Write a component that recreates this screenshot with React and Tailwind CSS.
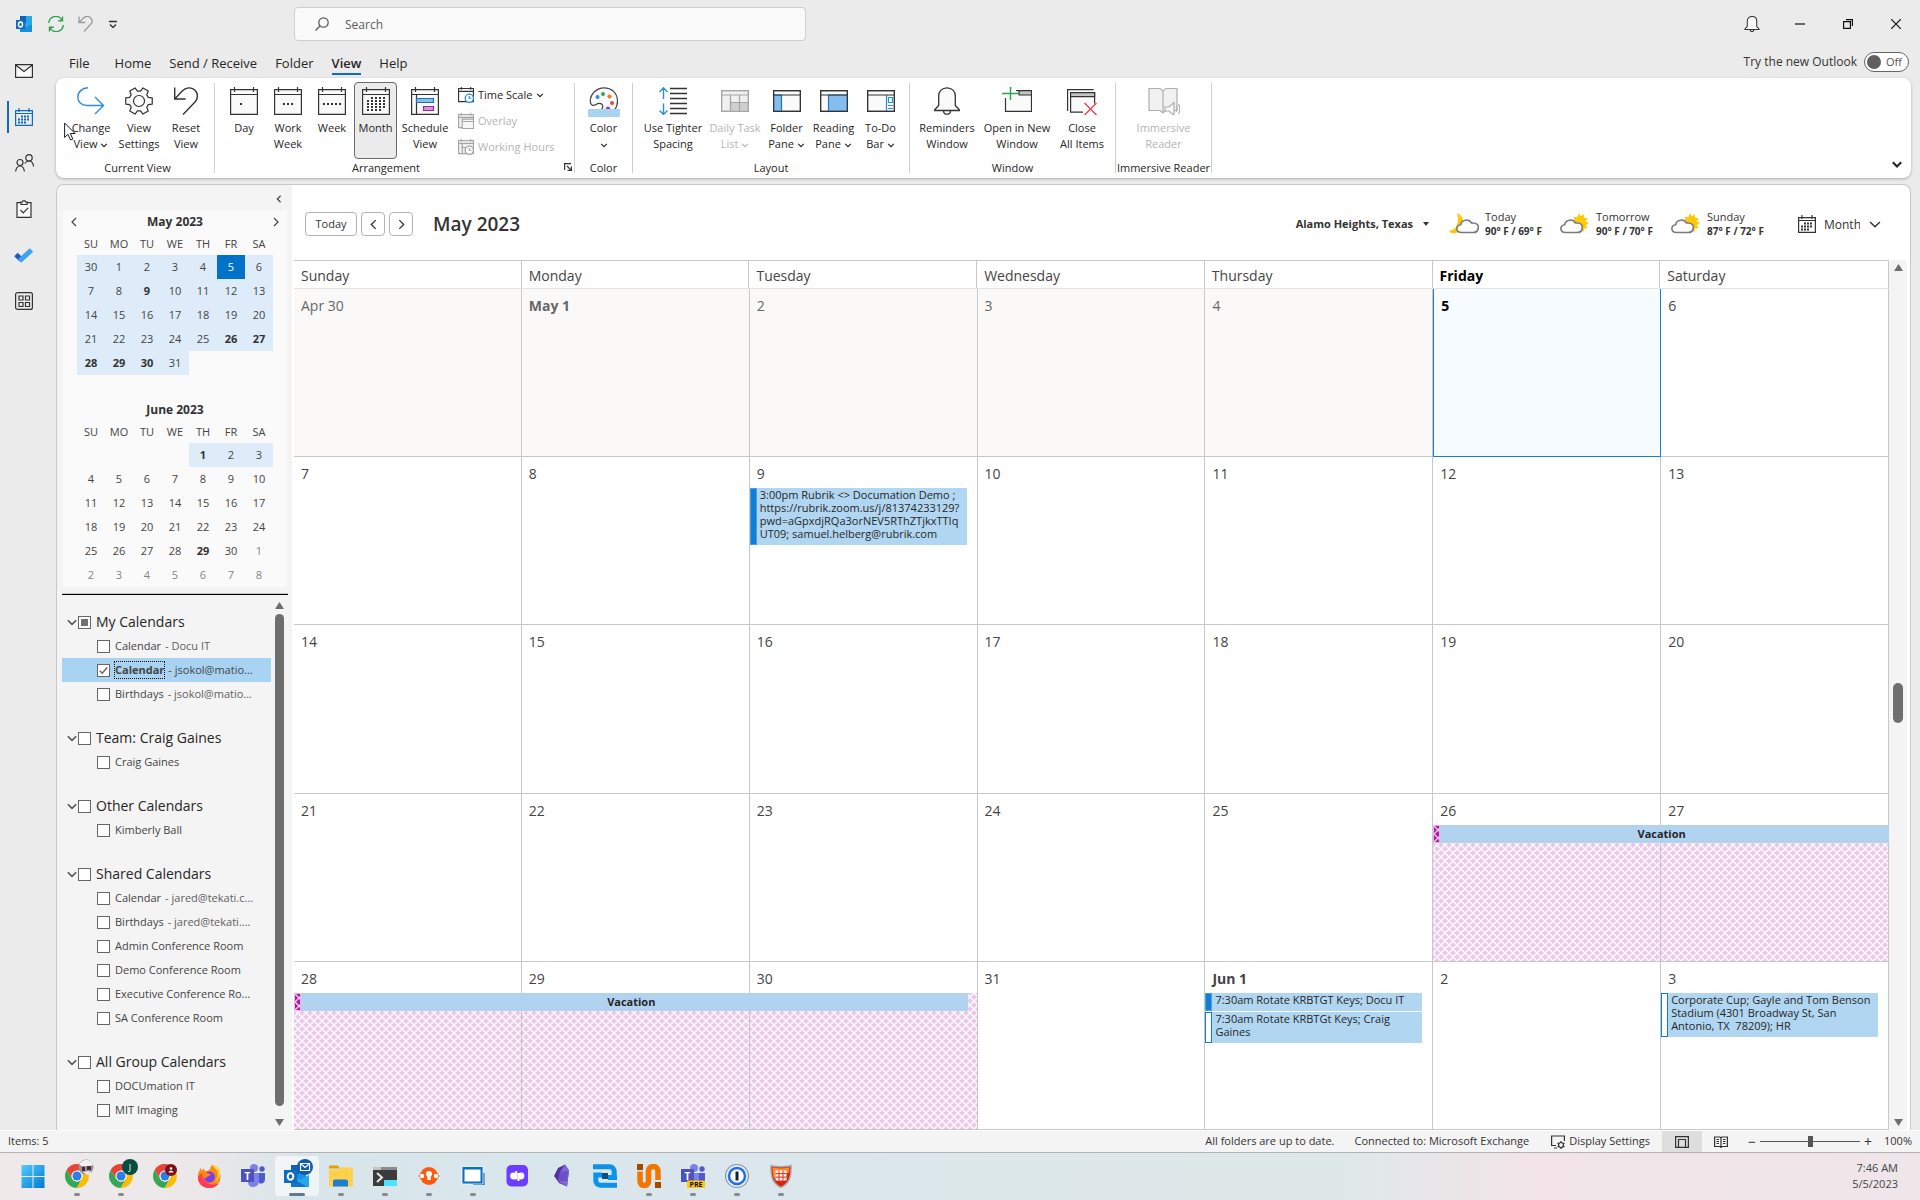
import { useState } from "react";
import clsx from "clsx";

const tabs = ["File", "Home", "Send / Receive", "Folder", "View", "Help"];

const miniMonths = [
  {
    title: "May 2023",
    nav: true,
    weeks: [
      [30, 1, 2, 3, 4, 5, 6],
      [7, 8, 9, 10, 11, 12, 13],
      [14, 15, 16, 17, 18, 19, 20],
      [21, 22, 23, 24, 25, 26, 27],
      [28, 29, 30, 31, null, null, null],
      [null, null, null, null, null, null, null],
    ],
    shaded: (w, d) => d !== null,
    bold: (w, d) => (w === 1 && d === 9) || (w >= 3 && [26, 27, 28, 29, 30].includes(d)),
    today: (w, d) => d === 5,
    muted: () => false,
  },
  {
    title: "June 2023",
    nav: false,
    weeks: [
      [null, null, null, null, 1, 2, 3],
      [4, 5, 6, 7, 8, 9, 10],
      [11, 12, 13, 14, 15, 16, 17],
      [18, 19, 20, 21, 22, 23, 24],
      [25, 26, 27, 28, 29, 30, 1],
      [2, 3, 4, 5, 6, 7, 8],
    ],
    shaded: (w, d) => w === 0 && d !== null,
    bold: (w, d) => (w === 0 && d === 1) || d === 29,
    today: () => false,
    muted: (w, d) => w === 5 || (w === 4 && d === 1),
  },
];

const calendarGroups = [
  {
    name: "My Calendars",
    partial: true,
    items: [
      { name: "Calendar", owner: "Docu IT" },
      { name: "Calendar", owner: "jsokol@matio...", selected: true },
      { name: "Birthdays", owner: "jsokol@matio..." },
    ],
  },
  { name: "Team: Craig Gaines", items: [{ name: "Craig Gaines" }] },
  { name: "Other Calendars", items: [{ name: "Kimberly Ball" }] },
  {
    name: "Shared Calendars",
    items: [
      { name: "Calendar", owner: "jared@tekati.c..." },
      { name: "Birthdays", owner: "jared@tekati...." },
      { name: "Admin Conference Room" },
      { name: "Demo Conference Room" },
      { name: "Executive Conference Ro..." },
      { name: "SA Conference Room" },
    ],
  },
  { name: "All Group Calendars", items: [{ name: "DOCUmation IT" }, { name: "MIT Imaging" }] },
];

const days = ["Sunday", "Monday", "Tuesday", "Wednesday", "Thursday", "Friday", "Saturday"];

const weeks = [
  ["Apr 30", "May 1", "2", "3", "4", "5", "6"],
  ["7", "8", "9", "10", "11", "12", "13"],
  ["14", "15", "16", "17", "18", "19", "20"],
  ["21", "22", "23", "24", "25", "26", "27"],
  ["28", "29", "30", "31", "Jun 1", "2", "3"],
];

// keyed by week index and weekday index
const events = {
  "1-2": [
    {
      solid: true,
      lines: [
        "3:00pm Rubrik <> Documation Demo ;",
        "https://rubrik.zoom.us/j/81374233129?",
        "pwd=aGpxdjRQa3orNEV5RThZTjkxTTIq",
        "UT09; samuel.helberg@rubrik.com",
      ],
    },
  ],
  "4-4": [
    { solid: true, lines: ["7:30am Rotate KRBTGT Keys; Docu IT"] },
    { solid: false, lines: ["7:30am Rotate KRBTGt Keys; Craig", "Gaines"] },
  ],
  "4-6": [
    { solid: false, lines: ["Corporate Cup; Gayle and Tom Benson", "Stadium (4301 Broadway St, San", "Antonio, TX  78209); HR"] },
  ],
};

function Chevron({ dir = "down", size = 10, width = 1.5 }) {
  const d = {
    down: "M1.5 3.5 5 7l3.5-3.5",
    left: "M7 1 3 5l4 4",
    right: "M3 1l4 4-4 4",
  }[dir];
  return (
    <svg width={size} height={size} viewBox="0 0 10 10" fill="none" stroke="currentColor" strokeWidth={width} className="inline-block shrink-0">
      <path d={d} />
    </svg>
  );
}

function Triangle({ up }) {
  return (
    <svg width="9" height="8" viewBox="0 0 9 8" className="shrink-0" fill="#6e6e6e">
      <path d={up ? "M4.5 0 9 7H0z" : "M4.5 8 0 1h9z"} />
    </svg>
  );
}

function Svg({ w = 28, h = w, box, children, className }) {
  return (
    <svg width={w} height={h} viewBox={box || `0 0 ${w} ${h}`} fill="none" stroke="#333" strokeWidth="1.2" className={clsx("shrink-0", className)}>
      {children}
    </svg>
  );
}

/* ---------- ribbon icons ---------- */

function CalFrame({ children }) {
  return (
    <Svg>
      <path d="M.6 2.6h26.8v24.8H.6z" fill="#fafafa" />
      <path d="M.6 7.5h26.8M4.5 0v5M23.5 0v5" />
      <g fill="#333" stroke="none">{children}</g>
    </Svg>
  );
}

const dot = (x, y) => <rect key={`${x}-${y}`} x={x} y={y} width="2" height="2" />;

const DayIcon = () => <CalFrame>{dot(10, 16)}</CalFrame>;
const WorkWeekIcon = () => <CalFrame>{[9, 13, 17].map((x) => dot(x, 16))}</CalFrame>;
const WeekIcon = () => <CalFrame>{[5, 9, 13, 17, 21].map((x) => dot(x, 16))}</CalFrame>;
const MonthIcon = () => (
  <CalFrame>
    {[9, 13, 17, 21].map((x) => dot(x, 10))}
    {[13, 16, 19].map((y) => [5, 9, 13, 17, 21].map((x) => dot(x, y)))}
    {[5, 9, 13, 17].map((x) => dot(x, 22))}
  </CalFrame>
);
const ScheduleIcon = () => (
  <CalFrame>
    <path d="M5.5 7.5v20" stroke="#333" />
    <path d="M5.5 11.5h17v4h-17z" fill="#83beec" stroke="#1f73b7" />
    <path d="M12.5 19.5h10v4h-10z" fill="#d993df" stroke="#8f2fa3" />
  </CalFrame>
);

const ChangeViewIcon = () => (
  <Svg>
    <path stroke="#2b8fd6" strokeWidth="1.4" d="M11 .8C5 1 .8 5 .8 10.2c0 5 4 8.3 9.2 8.3h16.5M18 10l8.5 8.5L18 27" />
  </Svg>
);

function GearIcon() {
  const points = [];
  for (let i = 0; i < 6; i++) {
    [[-21, 10], [-13, 13.6], [13, 13.6], [21, 10]].forEach(([off, r]) => {
      const a = ((i * 60 + off) * Math.PI) / 180;
      points.push(`${(14 + r * Math.cos(a)).toFixed(2)},${(14 + r * Math.sin(a)).toFixed(2)}`);
    });
  }
  return (
    <Svg>
      <polygon points={points.join(" ")} fill="#fafafa" strokeLinejoin="round" />
      <circle cx="14" cy="14" r="5.5" fill="#fff" />
    </Svg>
  );
}

const ResetIcon = () => (
  <Svg>
    <path strokeWidth="1.4" d="M2.7.5V12h11M3 11.7l7-7.5C14 0 19 0 22.5 2.8c4 3.5 3.6 9.2.3 12.5L11 27.5" />
  </Svg>
);

function SmallCal({ kind }) {
  const gray = kind !== "time";
  const c = gray ? "#a6a6a6" : "#333";
  return (
    <Svg w={16} box="0 0 17 17">
      <g stroke={c}>
        <path d="M.6 1.6h15.8v14H.6z" fill={gray ? "#f0f0f0" : "#fff"} />
        <path d="M.6 4.6h15.8M3.5 0v3M13.5 0v3" />
        {kind === "overlay" && <path d="M4.5 6.5h12v10h-12zM4.5 9h12" fill="#f6f6f6" />}
        {kind === "hours" && <path d="M4.5 5v11M4.5 9h8" />}
      </g>
      {kind !== "overlay" && (
        <g stroke={gray ? "#a6a6a6" : "#2b8fd6"} fill="#fff">
          <circle cx="12" cy="12" r="4.4" strokeWidth="1.4" />
          <path d="M12 9.5V12h2.2" />
        </g>
      )}
    </Svg>
  );
}

const PaletteIcon = () => (
  <Svg w={32} h={30}>
    <path d="M16 .8C8.5.8 2.5 7 2.2 14c-.1 4 3 5.5 5.8 3.5 2.5-1.8 5.5-1.5 6.5.5 1 2.2-.5 3-1 5h13c2-2.5 3-6 3-9C29.5 6 23.5.8 16 .8z" fill="#fafafa" stroke="#444" />
    <g stroke="none">
      <circle cx="9.5" cy="10" r="2" fill="#2b8fd6" />
      <circle cx="15" cy="7" r="2" fill="#3ba452" />
      <circle cx="21.5" cy="9.5" r="2.1" fill="#ef7d1a" />
      <circle cx="24" cy="16" r="2.1" fill="#ea4a4a" />
      <circle cx="20" cy="21.5" r="2.1" fill="#9b3fae" />
      <path d="M0 22h32v8H0z" fill="#a9d3f3" />
    </g>
  </Svg>
);

const TighterIcon = () => (
  <Svg>
    <path d="M11 1.5h17M11 6.5h17M11 11.5h17M11 16.5h17M11 21.5h17M11 26.5h17" strokeWidth="1.3" />
    <path d="M4.5 1v11M.5 5l4-4.2 4 4.2M4.5 27.5v-11M.5 23.5l4 4 4-4" stroke="#2b8fd6" strokeWidth="1.4" />
  </Svg>
);

function PaneIcon({ kind }) {
  return (
    <Svg>
      <g stroke={kind === "task" ? "#a6a6a6" : "#333"}>
        <path d="M.6 3.6h26.8v20.8H.6z" fill={kind === "task" ? "#f0f0f0" : "#fafafa"} />
        {kind === "folder" && <path d="M.6 8h7.9v16.4H.6z" fill="#83beec" stroke="#1f73b7" />}
        {kind === "reading" && <path d="M8.5 8h18.9v16.4H8.5z" fill="#83beec" stroke="#1f73b7" />}
        {kind === "todo" && <path d="M19.5 8v16.4M21.5 10.5h4v5h-4zM21 18.5h5M21 21.5h5" stroke="#2b8fd6" />}
        {kind === "task" && <path d="M9.5 15.5h17.9v9H9.5z" fill="#cfcfcf" />}
        {kind === "task" && <path d="M9.5 8v16.4M18.5 8v16.4" />}
        <path d="M.6 3.6h26.8V8H.6zM.6 8v16.4h26.8V8" />
      </g>
    </Svg>
  );
}

function BellIcon({ w = 28 }) {
  return (
    <Svg w={w} box="0 0 28 28">
      <path strokeWidth={w > 24 ? 1.3 : 1.8} d="M14 .8c5 0 8.3 3.5 8.3 8.2v9.5l4 4.2v.8H1.7v-.8l4-4.2V9C5.7 4.3 9 .8 14 .8zM10.5 23.7c0 2.2 1.5 3.5 3.5 3.5s3.5-1.3 3.5-3.5" fill="#fafafa" />
    </Svg>
  );
}

const NewWindowIcon = () => (
  <Svg w={30} h={28}>
    <path d="M3.5 11v13.4h26V3.6H14" fill="#fafafa" />
    <path d="M17 3.6h12.5V8H17z" fill="#c4c4c4" />
    <path d="M8.5-1v14M0 6.5h16" stroke="#fff" strokeWidth="4" />
    <path d="M8.5-1v14M0 6.5h16" stroke="#2fa04c" strokeWidth="1.5" />
  </Svg>
);

const CloseAllIcon = () => (
  <Svg w={30} h={28}>
    <path d="M.6 24V2.6h26" />
    <path d="M3.6 5.6h24v19.5h-24z" fill="#fafafa" />
    <path d="M3.6 5.6h24v4h-24z" fill="#c4c4c4" />
    <path d="M16 16.5h14V28H16z" fill="#fff" stroke="none" />
    <path d="M17.5 16l12 12M29.5 16l-12 12" stroke="#e94b4b" strokeWidth="1.5" />
  </Svg>
);

const ReaderIcon = () => (
  <Svg w={32} h={28}>
    <g stroke="#b0b0b0" fill="#f1f1f1">
      <path d="M1 1.5h11l3 2.5 3-2.5h11v22H18L15 26l-3-2.5H1zM15 4v21" />
      <path d="M17 20h4l5-4.5v13L21 24h-4z" fill="#f8f8f8" />
      <path d="M28 19c1.2 1.5 1.2 4.5 0 6M30.3 17c2 2.5 2 7.5 0 10" fill="none" />
    </g>
  </Svg>
);

/* ---------- ribbon parts ---------- */

function RibbonButton({ icon, top, bottom, arrow, width, active, disabled }) {
  return (
    <button
      disabled={disabled}
      aria-pressed={active}
      className={clsx(
        "flex h-[77px] shrink-0 flex-col items-center rounded text-[11px] leading-4",
        width,
        active ? "border border-[#6b6b6b] bg-[#ebebeb] pt-1" : "pt-[5px]",
        disabled ? "text-[#b4b4b4]" : "text-[#262626]"
      )}
    >
      <span className="mb-1 flex h-[29px] justify-center">{icon}</span>
      <span className="whitespace-nowrap">{top}</span>
      <span className="whitespace-nowrap">
        {bottom} {arrow && <Chevron size={8} />}
      </span>
    </button>
  );
}

function RibbonGroup({ label, className, launcher, children }) {
  return (
    <section className="flex pt-[5px] pb-[3px]">
      <div className={clsx("flex flex-col justify-between", className)}>
        <div className="-mt-px flex">{children}</div>
        <div className={clsx("relative text-center text-[11px] leading-[14px] whitespace-nowrap text-[#262626]", launcher && "pr-6")}>
          {label}
          {launcher && (
            <button aria-label="Arrangement options" className="absolute top-0.5 right-0.5">
              <Svg w={8}>
                <path d="M.6 7V.6H7M3 3l4.4 4.4M7.4 3.5v3.9H3.5" />
              </Svg>
            </button>
          )}
        </div>
      </div>
      <div className="mb-0.5 w-px bg-[#cfcfcf]" />
    </section>
  );
}

function Ribbon() {
  return (
    <div className="flex h-[100px] items-stretch rounded-lg bg-white shadow-[0_1px_3px_rgba(0,0,0,0.28)]">
      <RibbonGroup label="Current View" className="w-[158px] pr-1.5 pl-[11px]">
        <div className="relative">
          <RibbonButton width="w-12" icon={<ChangeViewIcon />} top="Change" bottom="View" arrow />
          <svg className="pointer-events-none absolute top-10 -left-[3px]" width="12" height="19" viewBox="0 0 12 19" fill="#fff" stroke="#1a1a2a">
            <path d="M.6 1v14.5l3.3-3.2 2.6 5.7 2.3-1-2.5-5.5h4.8z" />
          </svg>
        </div>
        <RibbonButton width="w-12" icon={<GearIcon />} top="View" bottom="Settings" />
        <RibbonButton width="w-[46px]" icon={<ResetIcon />} top="Reset" bottom="View" />
      </RibbonGroup>
      <RibbonGroup label="Arrangement" className="w-[359px] pl-[7px]" launcher>
        <RibbonButton width="w-11" icon={<DayIcon />} top="Day" bottom="" />
        <RibbonButton width="w-11" icon={<WorkWeekIcon />} top="Work" bottom="Week" />
        <RibbonButton width="w-11" icon={<WeekIcon />} top="Week" bottom="" />
        <RibbonButton width="w-[43px]" icon={<MonthIcon />} top="Month" bottom="" active />
        <RibbonButton width="w-14" icon={<ScheduleIcon />} top="Schedule" bottom="View" />
        <div className="flex flex-col pl-[5px] text-[11px] whitespace-nowrap">
          <button className="flex h-[26px] items-center gap-1 text-[#262626]">
            <SmallCal kind="time" /> Time Scale <Chevron size={8} />
          </button>
          <button disabled className="flex h-[26px] items-center gap-1 text-[#b4b4b4]">
            <SmallCal kind="overlay" /> Overlay
          </button>
          <button disabled className="flex h-[26px] items-center gap-1 text-[#b4b4b4]">
            <SmallCal kind="hours" /> Working Hours
          </button>
        </div>
      </RibbonGroup>
      <RibbonGroup label="Color" className="w-[57px] items-center">
        <RibbonButton width="w-12" icon={<PaletteIcon />} top="Color" bottom="" arrow />
      </RibbonGroup>
      <RibbonGroup label="Layout" className="w-[276px] px-1.5">
        <RibbonButton width="w-[68px]" icon={<TighterIcon />} top="Use Tighter" bottom="Spacing" />
        <RibbonButton width="w-14" icon={<PaneIcon kind="task" />} top="Daily Task" bottom="List" arrow disabled />
        <RibbonButton width="w-[47px]" icon={<PaneIcon kind="folder" />} top="Folder" bottom="Pane" arrow />
        <RibbonButton width="w-[47px]" icon={<PaneIcon kind="reading" />} top="Reading" bottom="Pane" arrow />
        <RibbonButton width="w-[47px]" icon={<PaneIcon kind="todo" />} top="To-Do" bottom="Bar" arrow />
      </RibbonGroup>
      <RibbonGroup label="Window" className="w-[205px] px-1">
        <RibbonButton width="w-[66px]" icon={<BellIcon />} top="Reminders" bottom="Window" />
        <RibbonButton width="w-[74px]" icon={<NewWindowIcon />} top="Open in New" bottom="Window" />
        <RibbonButton width="w-14" icon={<CloseAllIcon />} top="Close" bottom="All Items" />
      </RibbonGroup>
      <RibbonGroup label="Immersive Reader" className="w-[95px] items-center">
        <RibbonButton width="w-16" icon={<ReaderIcon />} top="Immersive" bottom="Reader" disabled />
      </RibbonGroup>
      <button aria-label="Collapse ribbon" className="ml-auto self-end px-2 pb-1 text-[#262626]">
        <Chevron size={12} width={1.8} />
      </button>
    </div>
  );
}

/* ---------- title bar ---------- */

function TitleBar() {
  return (
    <header className="flex h-12 items-center pl-4">
      <Svg w={16}>
        <g stroke="none">
          <path d="M4 0h12v14H4z" fill="#28a8ea" />
          <path d="M4 0h6v7H4z" fill="#0f64b5" />
          <path d="M4 8l6 3.5L16 8v8H4z" fill="#1490df" />
          <path d="M0 4h9v9H0z" fill="#0f6cbd" />
          <ellipse cx="4.5" cy="8.5" rx="2" ry="2.4" fill="none" stroke="#fff" strokeWidth="1.5" />
        </g>
      </Svg>
      <button aria-label="Sync" className="ml-4">
        <Svg w={16}>
          <path stroke="#2fa04c" strokeWidth="1.4" d="M.8 7A7 7 0 0 1 14 4.2M14.5.5v4.3h-4.3M15.2 9A7 7 0 0 1 2 11.8M1.5 15.5v-4.3h4.3" />
        </Svg>
      </button>
      <button aria-label="Undo" className="ml-[14px]">
        <Svg w={15} h={16}>
          <path stroke="#9a9a9a" strokeWidth="1.3" d="M1 .5v6h6.2M1.2 6.2 5.5 2c2-2 5-2 7-.2 2 2 2 4.6.2 6.5L6 15.5" />
        </Svg>
      </button>
      <button aria-label="Customize quick access" className="ml-4">
        <Svg w={8}>
          <path d="M0 1.5h8M1 4.5l3 3 3-3" strokeWidth="1.4" />
        </Svg>
      </button>
      <label className="ml-[177px] flex h-[34px] w-[512px] items-center gap-4 rounded border border-[#cfcfcf] bg-[#fafafa] px-5">
        <Svg w={14}>
          <circle cx="8.5" cy="5.5" r="4.7" stroke="#555" />
          <path d="M5 9 .5 13.5" stroke="#555" />
        </Svg>
        <input type="text" placeholder="Search" aria-label="Search" className="w-full bg-transparent pt-0.5 text-[12px] placeholder:text-[#5c5c5c] focus:outline-none" />
      </label>
      <div className="ml-auto flex items-center">
        <button aria-label="Notifications" className="flex w-12 justify-center">
          <BellIcon w={16} />
        </button>
        <button aria-label="Minimize" className="flex w-12 justify-center">
          <Svg w={10}>
            <path d="M0 5h10" stroke="#111" />
          </Svg>
        </button>
        <button aria-label="Restore" className="flex w-12 justify-center">
          <Svg w={10}>
            <path d="M.6 2.6h6.8v6.8H.6zM3 .6h6.4V7" stroke="#111" />
          </Svg>
        </button>
        <button aria-label="Close" className="flex w-12 justify-center">
          <Svg w={10}>
            <path d="m0 0 10 10M10 0 0 10" stroke="#111" />
          </Svg>
        </button>
      </div>
    </header>
  );
}

/* ---------- left rail ---------- */

function Rail() {
  const items = [
    ["Mail", <Svg w={18} h={14}><path d="M.6.6h16.8v12.8H.6zM.6 1 9 7.5 17.4 1" fill="#fafafa" /></Svg>],
    [
      "Calendar",
      <Svg w={18}>
        <path d="M.6 2.6h16.8v14.8H.6zM.6 5.5h16.8M4 0v4M14 0v4" stroke="#0f6cbd" />
        <path d="M6 8.5h9M3 11.5h12M3 14.5h8" stroke="#0f6cbd" strokeWidth="2" strokeDasharray="2 1" />
      </Svg>,
    ],
    ["People", <Svg w={19}><circle cx="5" cy="8.5" r="3" /><circle cx="14" cy="3.8" r="3.2" /><path d="M.6 17.5c.5-3.5 2-5.5 4.4-5.5s4 2 4.4 5.5M9.8 9.5C10.700 8 12.100 7 14 7c2.600 0 4.200 2 4.600 5.500" /></Svg>],
    ["Tasks", <Svg w={16} h={18}><path d="M1 2.6h14v14.8H1z" fill="#fafafa" /><path d="M5 4.5V2h1.5C6.5.8 7 .6 8 .6s1.500.2 1.500 1.400H11v2.500zM4.500 10l2.700 2.800 5-5" fill="#fafafa" /></Svg>],
    ["To Do", <Svg w={20} h={16}><path d="m2 7.5 5 5" stroke="#185abd" strokeWidth="5" /><path d="m5.5 14 12-11" stroke="#3fa2ee" strokeWidth="5" /></Svg>],
    ["More apps", <Svg w={18}><rect x=".6" y=".6" width="16.8" height="16.8" rx="2" /><path d="M4 4h4v4H4zM10.5 4h4v4h-4zM4 10.5h4v4H4zM10.5 10.5h4v4h-4z" /></Svg>],
  ];
  return (
    <nav className="flex w-14 shrink-0 flex-col">
      {items.map(([name, icon]) => (
        <button key={name} aria-label={name} className="flex h-[46px] items-center pl-[7px]">
          <span className={clsx("h-8 w-0.5", name === "Calendar" && "bg-[#0f6cbd]")} />
          <span className="ml-[5px] flex w-5 justify-center">{icon}</span>
        </button>
      ))}
    </nav>
  );
}

/* ---------- sidebar ---------- */

function MiniMonth({ month }) {
  return (
    <div className="px-1.5">
      <div className="flex h-[22px] items-center justify-between text-[#444]">
        <button aria-label="Previous month" className={clsx("flex", !month.nav && "invisible")}>
          <Chevron dir="left" width={1.2} />
        </button>
        <h3 className="text-[12px] font-bold text-[#333]">{month.title}</h3>
        <button aria-label="Next month" className={clsx("flex", !month.nav && "invisible")}>
          <Chevron dir="right" width={1.2} />
        </button>
      </div>
      <table className="mx-auto table-fixed text-center text-[11px] text-[#444]">
        <thead>
          <tr className="h-[22px]">
            {["SU", "MO", "TU", "WE", "TH", "FR", "SA"].map((d) => (
              <th key={d} className="w-7 p-0 font-normal">{d}</th>
            ))}
          </tr>
        </thead>
        <tbody>
          {month.weeks.map((week, w) => (
            <tr key={w} className="h-6">
              {week.map((d, i) => (
                <td
                  key={i}
                  className={clsx(
                    "w-7 p-0 pt-px",
                    month.today(w, d) ? "bg-[#0072c9] text-white" : month.shaded(w, d) && "bg-[#deebf9]",
                    month.bold(w, d) && "font-bold text-[#333]",
                    month.muted(w, d) && "text-[#858585]"
                  )}
                >
                  {d}
                </td>
              ))}
            </tr>
          ))}
        </tbody>
      </table>
    </div>
  );
}

function Check({ id, checked, onChange, partial }) {
  return (
    <span className="grid size-[13px] shrink-0 place-items-center">
      <input id={id} type="checkbox" checked={checked} onChange={onChange} className="col-start-1 row-start-1 size-[13px] appearance-none border border-[#666] bg-white" />
      {partial && <span className="pointer-events-none col-start-1 row-start-1 size-[7px] bg-[#707070]" />}
      {checked && (
        <svg width="9" height="9" viewBox="0 0 9 9" fill="none" stroke="#666" strokeWidth="1.5" className="pointer-events-none col-start-1 row-start-1">
          <path d="M.8 4.8 3.2 7.2l5-5.7" />
        </svg>
      )}
    </span>
  );
}

function Sidebar() {
  const [checked, setChecked] = useState({ "0-1": true });
  const toggle = (id) => setChecked((c) => ({ ...c, [id]: !c[id] }));

  return (
    <aside className="flex w-[235px] shrink-0 flex-col bg-[#f4f4f4] pl-[5px]">
      <div className="flex h-[26px] items-center justify-end pt-0.5 pr-[9px]">
        <button aria-label="Minimize folder pane" className="flex text-[#555]">
          <Chevron dir="left" size={8} width={1.8} />
        </button>
      </div>
      <div className="mr-[5px] ml-px bg-[#fafafa]">
        {miniMonths.map((m) => (
          <MiniMonth key={m.title} month={m} />
        ))}
      </div>
      <div className="mt-1.5 mr-1 mb-[3px] h-0.5 border-t border-b border-t-[#c8c8c8] border-b-[#000]" />
      <div className="flex flex-1 pr-2 pb-1">
        <div className="flex flex-1 flex-col gap-5 pt-3">
          {calendarGroups.map((g, gi) => (
            <section key={g.name}>
              <div className="flex h-6 items-center pl-1">
                <button aria-label={`Collapse ${g.name}`} className="flex text-[#555]">
                  <Chevron size={12} width={1.3} />
                </button>
                <Check id={`g${gi}`} partial={g.partial} checked={!!checked[`g${gi}`]} onChange={() => toggle(`g${gi}`)} />
                <label htmlFor={`g${gi}`} className="pl-[5px] text-[14px] leading-5 whitespace-nowrap text-[#262626]">{g.name}</label>
              </div>
              {g.items.map((c, i) => {
                const id = `${gi}-${i}`;
                return (
                  <div key={id} className={clsx("flex h-6 items-center pl-[35px]", c.selected && "bg-[#a9d3f3]")}>
                    <Check id={id} checked={!!checked[id]} onChange={() => toggle(id)} />
                    <label htmlFor={id} className="flex gap-[3px] pl-1 text-[11px] leading-4 whitespace-nowrap text-[#444]">
                      <span className={clsx("border border-dotted", c.selected ? "border-[#111] font-bold" : "border-transparent")}>{c.name}</span>
                      {c.owner && <span className={clsx("py-px", !c.selected && "text-[#5f5f5f]")}>- {c.owner}</span>}
                    </label>
                  </div>
                );
              })}
            </section>
          ))}
        </div>
        <div className="flex w-[13px] flex-col items-end gap-1 pt-1">
          <Triangle up />
          <div className="w-[9px] flex-1 rounded-full bg-[#6e6e6e]" />
          <span className="pt-2">
            <Triangle />
          </span>
        </div>
      </div>
    </aside>
  );
}

/* ---------- calendar toolbar ---------- */

function WeatherIcon({ night }) {
  return (
    <svg width="30" height="22" viewBox="0 0 30 22" fill="none" className="shrink-0">
      {night ? (
        <path d="M8 0c8 3 8 12 2 18-3 3-8 3-10 0 7-1 11-8 8-18z" fill="#ffc800" />
      ) : (
        <path d="M19 0l1.7 3.2 3.1-1.9L24 5l3.6.3-1.9 3.2L29 10.2 25.7 12l1.8 3.2-3.6.2-.3 3.6L18 16 13 8l1.5-.5-.6-3.5 3.5.2z" fill="#ffc800" />
      )}
      <path
        transform={night ? "translate(7 3)" : "translate(0 3)"}
        d="M5.5 16.5c-6 0-6-7.500-.8-7.700C5.300 4 12.500 2 15.500 7c6-.5 7.500 2.500 6.700 5.500-.5 3-2.700 4-5 4z"
        fill="#fff"
        stroke="#7a7a7a"
        strokeWidth="1.6"
      />
    </svg>
  );
}

function CalendarToolbar() {
  const weather = [
    { day: "Today", temp: "90° F / 69° F", night: true },
    { day: "Tomorrow", temp: "90° F / 70° F" },
    { day: "Sunday", temp: "87° F / 72° F" },
  ];
  return (
    <div className="flex h-[75px] items-center pt-[3px] pr-7 pl-[11px] text-[#333]">
      <div className="flex gap-1">
        <button className="h-6 w-[52px] rounded border border-[#b3b3b3] text-[11px]">Today</button>
        <button aria-label="Previous" className="flex size-6 items-center justify-center rounded border border-[#b3b3b3]">
          <Chevron dir="left" size={11} width={1.2} />
        </button>
        <button aria-label="Next" className="flex size-6 items-center justify-center rounded border border-[#b3b3b3]">
          <Chevron dir="right" size={11} width={1.2} />
        </button>
      </div>
      <h1 className="ml-5 text-[19px] leading-6 font-semibold">May 2023</h1>
      <button className="ml-auto flex items-center text-[11px] font-bold whitespace-nowrap">
        Alamo Heights, Texas
        <svg width="6" height="4" viewBox="0 0 6 4" className="ml-2.5" fill="#333">
          <path d="M0 0h6L3 4z" />
        </svg>
      </button>
      <div className="ml-5 flex">
        {weather.map((w) => (
          <div key={w.day} className="flex w-[111px] items-center gap-1.5 text-[11px] leading-[15px] whitespace-nowrap">
            <WeatherIcon night={w.night} />
            <div>
              <p>{w.day}</p>
              <p className="text-[10px] font-bold">{w.temp}</p>
            </div>
          </div>
        ))}
      </div>
      <label className="ml-4 flex items-center gap-2">
        <Svg w={18}>
          <path d="M.6 2.6h16.8v14.8H.6zM.6 5.5h16.8M4 0v4M14 0v4" />
          <path d="M6 8.5h9M3 11.5h12M3 14.5h8" strokeWidth="2" strokeDasharray="2 1" />
        </Svg>
        <select aria-label="Calendar view" className="w-9 appearance-none bg-transparent pt-px text-[12px]">
          <option>Month</option>
        </select>
        <Chevron size={14} width={1} />
      </label>
    </div>
  );
}

/* ---------- month grid ---------- */

function EventCard({ event }) {
  return (
    <div className="mr-2.5 flex bg-[#b1d6f1] text-[11px] leading-[13px] text-[#262626]">
      <span className={clsx("w-[7px] shrink-0 border", event.solid ? "border-[#4ca0e0] bg-[#0f7fd6]" : "border-[#0f7fd6] bg-white")} />
      <div className="pb-[5px] pl-[3px] whitespace-pre">
        {event.lines.map((l) => (
          <p key={l}>{l}</p>
        ))}
      </div>
    </div>
  );
}

const hatch =
  "bg-[#eec5eb] bg-[linear-gradient(45deg,transparent_38%,#fff_50%,transparent_62%),linear-gradient(-45deg,transparent_38%,#fff_50%,transparent_62%)] bg-[length:8px_8px]";

const hatchDark =
  "bg-[#b515ab] bg-[linear-gradient(45deg,transparent_38%,#f3d3f0_50%,transparent_62%),linear-gradient(-45deg,transparent_38%,#f3d3f0_50%,transparent_62%)] bg-[length:8px_8px]";

function Vacation({ span, open }) {
  return (
    <>
      <div className={clsx("row-start-1 mt-[31px]", span, hatch)} />
      <div className={clsx("z-10 row-start-1 mt-[31px] flex h-[18px]", span, !open && "mr-2.5")}>
        <span className={clsx("w-[7px] border border-[#e9b5e5]", hatchDark)} />
        <span className="flex-1 bg-[#b1d3f0] pr-1.5 text-center text-[11px] leading-[18px] font-bold text-[#262626]">Vacation</span>
      </div>
    </>
  );
}

const columns = ["col-start-1", "col-start-2", "col-start-3", "col-start-4", "col-start-5", "col-start-6", "col-start-7"];

function MonthGrid() {
  return (
    <div className="flex flex-1 flex-col border-t border-[#c8c8c8]">
      <div className="grid h-[27px] grid-cols-7 border-r border-[#c8c8c8]">
        {days.map((d, i) => (
          <div key={d} className={clsx("border-[#c8c8c8] pl-[7px] text-[14px] leading-[30px] text-[#444]", i < 6 && "border-r", d === "Friday" && "font-bold text-black")}>
            {d}
          </div>
        ))}
      </div>
      <div className="grid flex-1 grid-rows-5 border-t border-[#e3e3e3]">
        {weeks.map((week, w) => (
          <div key={w} className="grid min-h-28 grid-cols-7 grid-rows-1">
            {w === 3 && <Vacation span="col-start-6 col-span-2" open />}
            {w === 4 && <Vacation span="col-start-1 col-span-3" />}
            {week.map((label, i) => {
              const past = w === 0 && i < 5;
              const today = w === 0 && i === 5;
              const monthStart = label.endsWith(" 1");
              const cellEvents = events[`${w}-${i}`];
              return (
                <div
                  key={label}
                  className={clsx(
                    "row-start-1 min-w-0 border-r border-b",
                    columns[i],
                    past && "bg-[#faf9f8] text-[#666]",
                    !past && !today && "text-[#444]",
                    today ? "border-l border-[#1a7fd0] bg-[#f6fbff] font-bold text-black" : "border-[#c8c8c8]",
                    monthStart && "font-bold"
                  )}
                >
                  <p className="h-[31px] pt-1 pl-[7px] text-[14px] leading-[26px]">{label}</p>
                  {cellEvents && (
                    <div className="flex flex-col gap-px font-normal">
                      {cellEvents.map((e) => (
                        <EventCard key={e.lines[0]} event={e} />
                      ))}
                    </div>
                  )}
                </div>
              );
            })}
          </div>
        ))}
      </div>
    </div>
  );
}

/* ---------- status bar ---------- */

function StatusBar() {
  return (
    <footer className="flex h-[23px] items-center border-t border-b border-t-white border-b-[#b3b3b3] bg-[#f4f4f4] px-2 text-[11px] text-[#333]">
      <span>Items: 5</span>
      <span className="ml-auto">All folders are up to date.</span>
      <span className="ml-5">Connected to: Microsoft Exchange</span>
      <button className="ml-[22px] flex items-center gap-1">
        <Svg w={14}>
          <path d="M5 10.5H.6V1h12.8v5M3 13h3" />
          <circle cx="10" cy="10" r="2.5" />
          <path d="M10 6v2M10 12v2M6.5 8l1.7 1M11.8 11l1.7 1M6.5 12l1.7-1M11.8 9l1.7-1" />
        </Svg>
        Display Settings
      </button>
      <button aria-label="Normal view" className="ml-3 flex h-full w-10 items-center justify-center bg-[#dedede]">
        <Svg w={14} h={12}>
          <path d="M.6.6h12.8v10.8H.6zM3.5 11V3.5h7V11" />
        </Svg>
      </button>
      <button aria-label="Reading view" className="flex w-[38px] justify-center">
        <Svg w={14} h={12}>
          <path d="M.6 1H6l1 1 1-1h5.4v9.5H8l-1 1-1-1H.6zM7 2v9M2.5 3.5H5M2.5 5.5H5M2.5 7.5H5M9 3.5h2.5M9 5.5h2.5M9 7.5h2.5" />
        </Svg>
      </button>
      <button aria-label="Zoom out" className="ml-2 text-[14px] leading-5">−</button>
      <input
        type="range"
        aria-label="Zoom"
        defaultValue={50}
        className="mx-1 h-px w-[100px] appearance-none bg-[#555] [&::-webkit-slider-thumb]:h-[11px] [&::-webkit-slider-thumb]:w-[5px] [&::-webkit-slider-thumb]:appearance-none [&::-webkit-slider-thumb]:bg-[#555]"
      />
      <button aria-label="Zoom in" className="text-[14px] leading-5">+</button>
      <span className="ml-3">100%</span>
    </footer>
  );
}

/* ---------- taskbar ---------- */

function Chrome({ badge }) {
  return (
    <Svg w={32} box="-4 -4 32 32" className="overflow-visible">
      <g stroke="none">
        <path d="M12 6.5h10.6A12 12 0 0 0 1.6 6l5.6 8.8z" fill="#ea4335" />
        <path d="M22.6 6.5H12a5.5 5.5 0 0 1 4.8 8.2L11.5 24A12 12 0 0 0 22.6 6.5z" fill="#fbbc04" />
        <path d="M1.6 6l5.6 8.8a5.5 5.5 0 0 0 9.6-.1L11.5 24A12 12 0 0 1 1.6 6z" fill="#34a853" />
        <circle cx="12" cy="12" r="5.6" fill="#fff" />
        <circle cx="12" cy="12" r="4.5" fill="#2f7de9" />
        {badge === "photo" && (
          <>
            <circle cx="21" cy="3" r="7.5" fill="#9a9296" />
            <path d="M14.5 1c1-6 12-7 13.5 0l-3 1h-8z" fill="#f2f2f2" />
            <path d="M17 3h3v4h-3zM22 2h4v4h-4z" fill="#4a2a38" />
            <path d="M18 8l6-1 3 2-5 2z" fill="#efe4e4" />
          </>
        )}
        {badge === "J" && <circle cx="21" cy="3" r="8" fill="#064e40" />}
        {badge === "user" && (
          <>
            <circle cx="18" cy="6" r="6" fill="#7a1015" />
            <circle cx="18" cy="4.5" r="1.3" fill="#fff" />
            <path d="M15.5 8.5c0-2.5 5-2.5 5 0z" fill="#fff" />
          </>
        )}
      </g>
      {badge === "J" && (
        <text x="21" y="6.5" textAnchor="middle" fontSize="9" fill="#fff" stroke="none">J</text>
      )}
    </Svg>
  );
}

function Teams({ pre }) {
  return (
    <Svg w={24} className="overflow-visible">
      <g stroke="none">
        <circle cx="13" cy="4" r="4" fill="#7b83eb" />
        <circle cx="21" cy="5" r="2.7" fill="#5059c9" />
        <path d="M16 9h8v7a4 4 0 0 1-6 3z" fill="#5059c9" />
        <path d="M7 9h11v8c0 4-3 6-6 6s-5-2-5-5z" fill="#7b83eb" />
        <path d="M0 5h13v13H0z" fill="#4b53bc" />
      </g>
      <text x="6.5" y="15.5" textAnchor="middle" fontSize="10" fontWeight="700" fill="#fff" stroke="none">T</text>
      {pre && <rect x="6" y="16.5" width="18" height="7.5" rx="1" fill="#ffc800" stroke="none" />}
      {pre && (
        <text x="15" y="23" textAnchor="middle" fontSize="7" fontWeight="700" fill="#111" stroke="none">PRE</text>
      )}
    </Svg>
  );
}

const taskbarApps = [
  ["Start", false, <Svg w={24}><g fill="url(#win)" stroke="none"><defs><linearGradient id="win" x1="0" y1="0" x2="24" y2="24" gradientUnits="userSpaceOnUse"><stop stopColor="#55d0fb" /><stop offset="1" stopColor="#0078d4" /></linearGradient></defs><path d="M.5 1h11v11H.5zM12.5 1h11v11h-11zM.5 13h11v11H.5zM12.5 13h11v11h-11z" /></g></Svg>],
  ["Chrome, personal", true, <Chrome badge="photo" />],
  ["Chrome, work", true, <Chrome badge="J" />],
  ["Chrome, guest", false, <Chrome badge="user" />],
  ["Firefox", false, <Svg w={24}><g stroke="none"><path d="M12 24C5 24 .8 19 .8 13c0-4 1.2-6 3-9l.8 2.5L7 4.5l1 3 5-2c0-2 1.5-4.5 3-5 0 2 2 3 3.5 5 2.5-.5 4 3.5 4 7.5C23.5 19 19 24 12 24z" fill="#ff8a16" /><path d="M15.5.5c0 2.5 4 4 5 8s-.5 7-2.5 9c5-1.500 6-8 4.500-12-2-3-5-4-7-5z" fill="#ffd43a" /><path d="M1 13c0 7 5 11 11 11 5 0 8-2 9.500-4.500C15 22 6 20 4.600 9z" fill="#ff3b57" /><circle cx="12.5" cy="13" r="5.5" fill="#7b3fe4" /><path d="M6 9c3-1 5 .5 8 1-1 2-4 2-5 4-3 0-4-3-3-5z" fill="#ff8a16" /></g></Svg>],
  ["Teams", false, <Teams />],
  [
    "Outlook",
    true,
    <Svg w={32} box="-4 -4 32 32" className="overflow-visible">
      <g stroke="none">
        <path d="M6 1h15v18H6z" fill="#1b8fe0" />
        <path d="M6 1h8v9H6z" fill="#0f64b5" />
        <path d="M6 11l9 5 9-5v12H6z" fill="#28a8ea" />
        <path d="M6 23V13l16 10z" fill="#1277c9" />
        <path d="M-1 6h13v13H-1z" fill="#0f6cbd" />
        <ellipse cx="5.5" cy="12.5" rx="2.8" ry="3.3" fill="none" stroke="#fff" strokeWidth="2" />
        <circle cx="20" cy="3" r="8" fill="#0f5cb0" />
      </g>
      <path d="M15.5-.5h9v7h-9zl4.5 4 4.5-4" stroke="#fff" />
    </Svg>,
  ],
  ["File Explorer", true, <Svg w={24}><g stroke="none"><path d="M0 1.5h9l2 3H0z" fill="#e5a000" /><path d="M0 5.5h10l2-2h12v19H0z" fill="#ffd04a" /><path d="M4 22.5v-5c0-1.5 1-2 2-2h11c1.5 0 2 1 2 2v5z" fill="#1c7fd1" /></g></Svg>],
  ["Terminal", true, <Svg w={24}><g stroke="none"><path d="M0 3h24v19H0z" fill="#3b3b3b" /><path d="M0 3h8v3H0z" fill="#c4c4c4" /><path d="M8 3h16v3H8z" fill="#8c8c8c" /><path d="M11 16h13v6H11z" fill="#4be3ff" /></g><path d="m4 9 5 4.5L4 18" stroke="#e6e6e6" strokeWidth="2" /></Svg>],
  ["Vault", true, <Svg w={24}><g stroke="none"><circle cx="12" cy="12" r="9" fill="#ff5a0c" /><path d="M1.5 12 5 8h14l3.5 4-3.5 4H5z" fill="#ff5a0c" /><circle cx="5" cy="12" r="2.2" fill="#fff" /><circle cx="19" cy="12" r="2.2" fill="#fff" /><circle cx="12" cy="10" r="3" fill="#fff" /><path d="M10.8 11h2.4l.8 5h-4z" fill="#fff" /></g></Svg>],
  ["Remote Desktop", true, <Svg w={24}><g stroke="none"><path d="M14 9h9.5v12H12z" fill="#0a64b5" /><path d="M1 2.5h21V20H1z" fill="#0a6fc9" stroke="#fff" strokeWidth=".8" /><path d="M3.5 5.5h16v12h-16z" fill="#fff" /></g></Svg>],
  ["Dialpad", false, <Svg w={24}><rect x="1.5" y="1" width="21.5" height="21.5" rx="5" fill="#6c3cff" stroke="none" /><circle cx="8.5" cy="12" r="3.4" fill="#fff" stroke="none" /><circle cx="16" cy="12" r="3.4" fill="#fff" stroke="none" /><path d="M11.2 7v8.5M13.5 9v8" stroke="#fff" strokeWidth="2" /></Svg>],
  ["Obsidian", false, <Svg w={24}><g stroke="none"><path d="M16 .5 9 4 5 12l5 7 8 3.5 1-8 1-8z" fill="#4d35a0" /><path d="M16 .5 11 8l-2 9 9 5.5 1-8 1-8z" fill="#8068d8" /><path d="m11 8 8-1-1 10H9z" fill="#6a50c4" /></g></Svg>],
  ["Quest", false, <Svg w={24}><path d="M0 2.8h16.5c3 0 4.7 2 4.7 4.7v6M24 21.2H7.5c-3 0-4.7-2-4.7-4.7V11H9M15 13.5h9" stroke="#0c93e8" strokeWidth="5" /><path d="M9 9h6v6H9z" fill="#0b4f80" stroke="none" /></Svg>],
  ["Snagit", true, <Svg w={24}><path d="M3 7.5V17c0 6 8.5 6 8.5 0V7c0-6 9.5-6 9.5 0v9" stroke="#f07800" strokeWidth="5.5" /><path d="M0 0h6v6H0zM18 18h6v6h-6z" fill="#a24a00" stroke="none" /></Svg>],
  ["Teams preview", true, <Teams pre />],
  ["1Password", true, <Svg w={24}><circle cx="12" cy="12" r="11.5" fill="#e6ecf3" stroke="#8b98a8" /><circle cx="12" cy="12" r="8" fill="#fff" stroke="#1f6fe5" strokeWidth="2.5" /><path d="M10.5 7.5h3v9h-3z" fill="#14233b" stroke="none" /></Svg>],
  ["FortiClient", true, <Svg w={24}><path d="M2 1.5C6 3 18 3 22 1.5 22.5 12 21 19 12 23.5 3 19 1.5 12 2 1.5z" fill="#d9230f" stroke="#a9a9a9" strokeWidth="1.5" /><path d="M3.5 3.5c5 1 12 1 17 0l-.5 5-15 6c-1-3-1.5-7-1.5-11z" fill="#ff8a2a" stroke="none" /><path d="M6.5 6.5h11v10h-11z" fill="#fff" stroke="none" /><path d="M6.5 9.7h11M6.5 13.2h11M10 6.5v10M14 6.5v10" stroke="#e0452a" /></Svg>],
];

function Taskbar() {
  return (
    <div className="flex h-[47px] items-center bg-[linear-gradient(90deg,#efe9ea_0%,#ece8ea_10%,#d8e5ea_16%,#dbe7ec_40%,#dfe8e8_70%,#f2e4e8_80%,#efe6ea_100%)] pr-[22px] pb-0.5 pl-[11px]">
      {taskbarApps.map(([name, running, icon]) => (
        <button
          key={name}
          aria-label={name}
          className={clsx("flex h-10 w-11 flex-col items-center justify-end", name === "Outlook" && "rounded bg-white/60")}
        >
          <span className="flex h-8 items-center justify-center">{icon}</span>
          <span className={clsx("mt-px h-[3px] rounded-full", name === "Outlook" ? "w-4 bg-[#5c7a90]" : "w-1.5", running && name !== "Outlook" && "bg-[#858a8d]")} />
        </button>
      ))}
      <div className="ml-auto text-right text-[11px] leading-4 text-[#444]">
        <p>7:46 AM</p>
        <p>5/5/2023</p>
      </div>
    </div>
  );
}

export default function App() {
  const [activeTab, setActiveTab] = useState("View");
  const [newOutlook, setNewOutlook] = useState(false);

  return (
    <div className="flex min-h-screen flex-col bg-[#ebebeb] font-['Open_Sans','Noto_Sans',sans-serif] text-[#333]">
      <TitleBar />
      <div className="flex flex-1">
        <Rail />
        <div className="flex min-w-0 flex-1 flex-col pr-[9px]">
          <div className="flex h-[30px] items-end pr-0.5 pb-[3px] pl-1">
            {tabs.map((t) => (
              <button key={t} onClick={() => setActiveTab(t)} className="px-[9px] text-[13px] leading-5 text-[#262626] first:pr-4">
                <span className={clsx("block border-b-2", t === activeTab ? "border-[#0f6cbd] font-semibold" : "border-transparent")}>{t}</span>
              </button>
            ))}
            <label className="mb-[3px] ml-auto flex items-center gap-[7px] text-[12px]">
              Try the new Outlook
              <span className="flex h-5 w-[45px] items-center justify-between rounded-full border border-[#666] bg-white pr-1.5 pl-0.5">
                <input
                  type="checkbox"
                  role="switch"
                  checked={newOutlook}
                  onChange={() => setNewOutlook((v) => !v)}
                  className="size-3.5 appearance-none rounded-full bg-[#5f5f5f]"
                />
                <span className="text-[11px] text-[#555]">Off</span>
              </span>
            </label>
          </div>
          <Ribbon />
          <div className="mt-1.5 flex flex-1 overflow-hidden rounded-t-lg border border-b-0 border-[#c8c8c8] bg-white">
            <Sidebar />
            <main className="flex min-w-0 flex-1 flex-col pl-0.5">
              <CalendarToolbar />
              <div className="flex flex-1">
                <MonthGrid />
                <div className="mr-[3px] flex w-[18px] flex-col items-center justify-between rounded bg-[#f4f4f4] py-1">
                  <Triangle up />
                  <div className="mt-4 h-10 w-2.5 rounded-full bg-[#6e6e6e]" />
                  <Triangle />
                </div>
              </div>
            </main>
          </div>
        </div>
      </div>
      <StatusBar />
      <Taskbar />
    </div>
  );
}
